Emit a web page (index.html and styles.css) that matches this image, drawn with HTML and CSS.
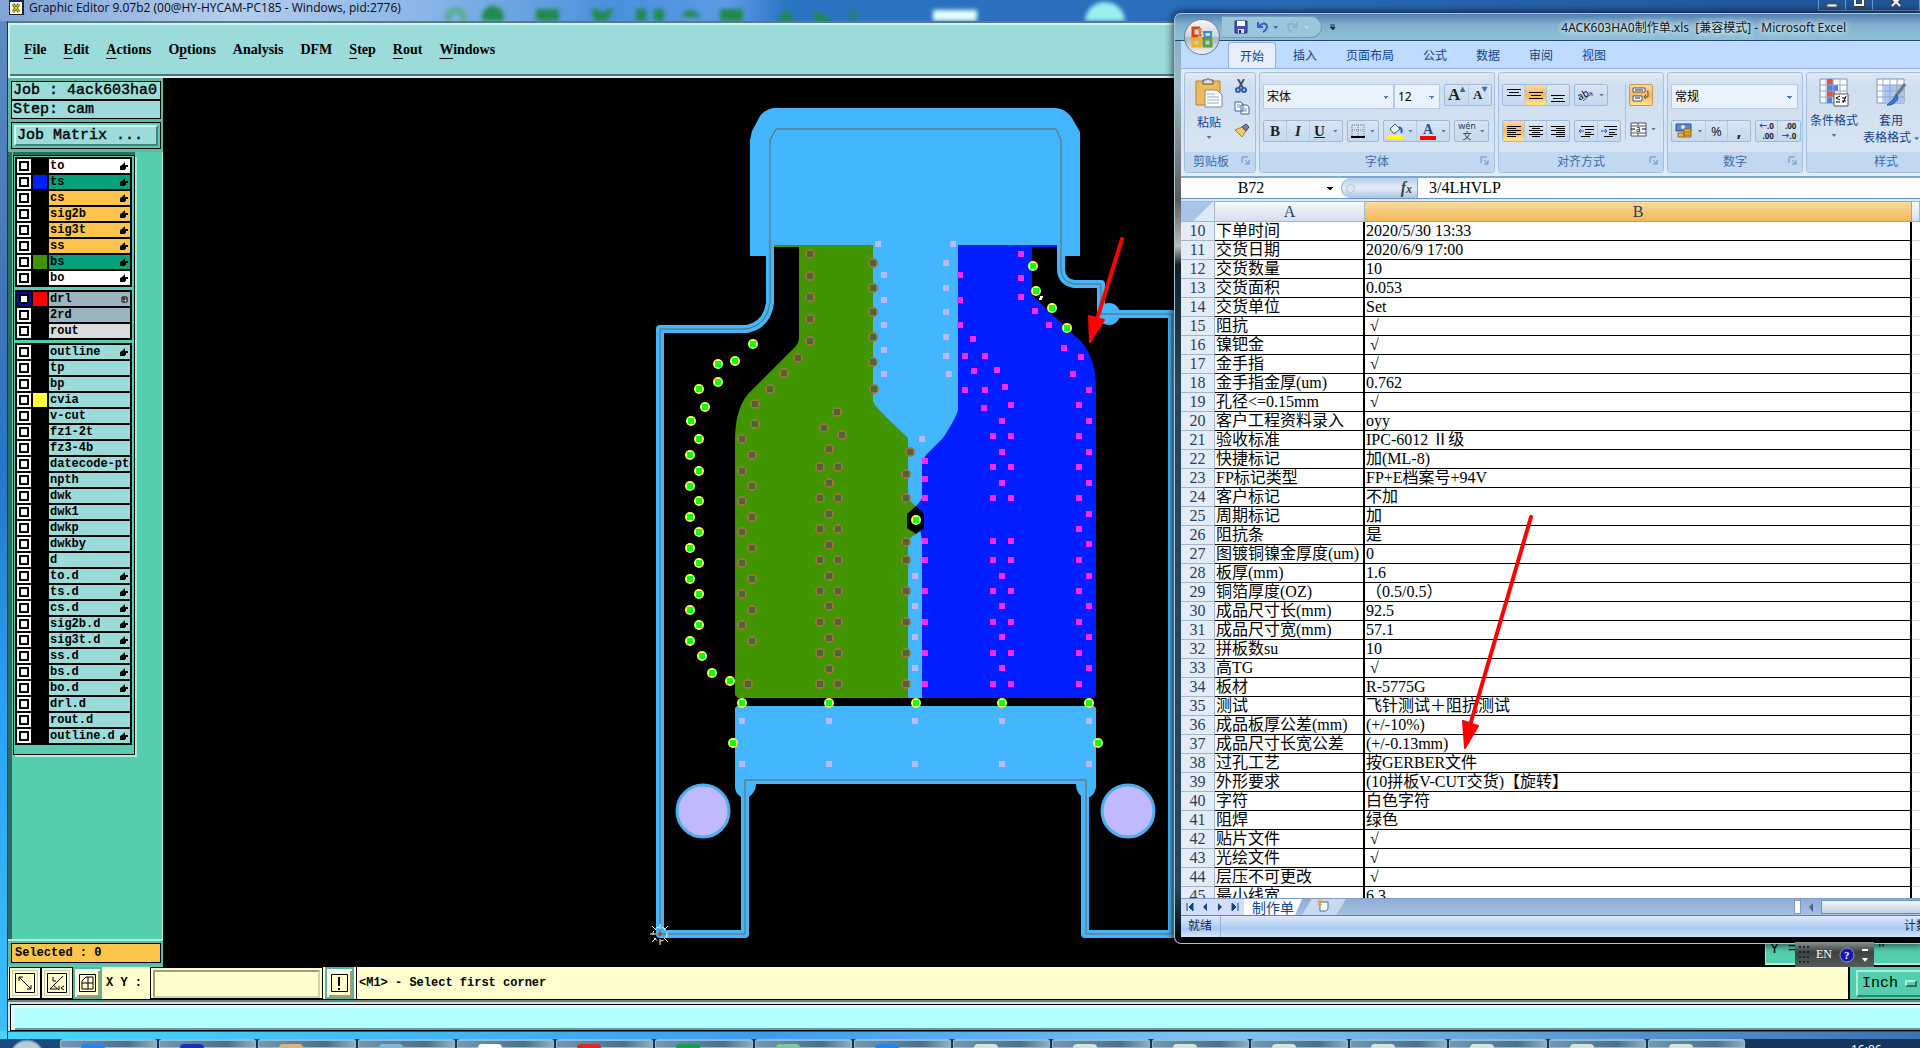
FILE: index.html
```html
<!DOCTYPE html>
<html lang="zh-CN">
<head>
  <meta charset="UTF-8" />
  <meta name="viewport" content="width=device-width, initial-scale=1.0" />
  <title>Graphic Editor 9.07b2</title>
  <link rel="stylesheet" href="styles.css">
</head>
<body>
  <div class="desktop">

    <!-- Graphic Editor -->
    <main class="editor">
      <header class="editor-title">
        <svg class="app-icon" width="15" height="15" viewBox="0 0 15 15"><path d="M0 0h15v15H0z" fill="#222"/><path d="M1 2h12v12H1z" fill="#fff"/><path d="M1 0h10v2H1z" fill="#12246e"/><path d="M4 4l6 8M10 4l-6 8" stroke="#777400" stroke-width="3"/><path d="M4 4l6 8M10 4l-6 8" stroke="#e2dc3c" stroke-width="1"/></svg>
        <span class="editor-name">Graphic Editor 9.07b2 (00@HY-HYCAM-PC185 - Windows, pid:2776)</span>
        <svg class="glass-icons" width="420" height="21" viewBox="0 0 420 21"><g fill="#1f8a4c"><circle cx="20" cy="18" r="8" fill="none" stroke="#4fae7a" stroke-width="5"/><circle cx="57" cy="17" r="11"/><path d="M100 9h23v12h-23zM155 9h8l4 5 4-5h7l-7 12h-12zM200 9h10v12h-10zM218 9h10v12h-10z"/><path d="M245 17q8-14 20 0M284 9h23v12h-23zM350 9l9 12h-18zM378 10l20 11h-20z"/><path d="M425 10v11h-10v-11z"/></g></svg>
        <svg class="glass-blobs" width="220" height="21" viewBox="0 0 220 21"><path d="M8 10h44v14H8z" fill="#e3fffc"/><circle cx="180" cy="22" r="20" fill="#9bf0ef"/></svg>
        <div class="window-buttons">
          <button aria-label="Minimize"><svg width="12" height="11"><path d="M1 4h10v3H1z" fill="#fff" stroke="#555"/></svg></button>
          <button aria-label="Maximize"><svg width="12" height="11"><path d="M2 -2h8v7H2z" fill="none" stroke="#444" stroke-width="4"/><path d="M2 -2h8v7H2z" fill="none" stroke="#fff" stroke-width="2"/></svg></button>
          <button aria-label="Close"><svg width="14" height="11"><path d="M3 -2l8 8M11 -2l-8 8" stroke="#444" stroke-width="4"/><path d="M3 -2l8 8M11 -2l-8 8" stroke="#fff" stroke-width="2"/></svg></button>
        </div>
      </header>

      <nav class="menubar">
        <a href="#"><u>F</u>ile</a>
        <a href="#"><u>E</u>dit</a>
        <a href="#"><u>A</u>ctions</a>
        <a href="#">O<u>p</u>tions</a>
        <a href="#">Analysis</a>
        <a href="#">DFM</a>
        <a href="#"><u>S</u>tep</a>
        <a href="#"><u>R</u>out</a>
        <a href="#"><u>W</u>indows</a>
      </nav>

      <div class="workspace">
        <aside class="sidebar">
          <div class="job-info">
            <div class="info-line">Job : 4ack603ha0</div>
            <div class="info-line">Step: cam</div>
            <div class="matrix-box"><button class="matrix-button">Job Matrix ...</button></div>
          </div>
          <div class="layer-area">
            <div class="layer-panel" id="layerPanel"></div>
          </div>
          <div class="selected-box"><div class="selected">Selected : 0</div></div>
        </aside>

        <section class="canvas">
          <svg class="board" width="100%" height="100%">
            <g transform="translate(-163 -78)">
              <!-- Copper areas -->
              <path d="M774 245H873V402L916 440V698H738L735 695V440Q735 405 752 390L796 346Q799 342 799 338V247H774Z" fill="#419600"/>
              <path d="M958 245H1057V247H1032V295L1074 335Q1096 352 1096 388V695L1093 698H916V440Z" fill="#001eff"/>
              <path d="M750 140L752 131L760 116Q766 108 776 108H1056Q1066 109 1072 118L1080 132V256H1065V245H958V410Q956 418 943 438L926 455L922 462V498L916 506L922 540V698H908V540L916 534V506L908 499V438L886 417Q876 407 873 402V245H774V256H750Z" fill="#43b6ff"/>
              <path d="M908 499L916 506L922 499ZM908 540L916 534L922 540Z" fill="#43b6ff"/>
              <path d="M916 506L924 514V528L916 534L907 528V514Z" fill="#000"/>
              <path d="M735 708L737 706H1094L1096 708V787Q1095 794 1090 797H1082Q1076 792 1076 784H756Q756 792 749 797H741Q735 793 735 787Z" fill="#43b6ff"/>
              <circle cx="1109" cy="314" r="11" fill="#43b6ff"/>

              <!-- Board outline -->
              <path d="M770 140V303Q767 325 747 329H660V934H745V780H1085V934H1172V314H1101V284H1074Q1062 282 1061 270V140" fill="none" stroke="#43b6ff" stroke-width="8" stroke-linejoin="round"/>
              <path d="M776 129H1056L1061 140V270Q1062 282 1074 284H1101V314H1172V934H1086V780H745V934H660V329H747Q767 325 770 303V140Z" fill="none" stroke="#75604e" stroke-width="1"/>

              <circle cx="703" cy="811" r="26" fill="#c0b9ff" stroke="#4eaef0" stroke-width="3"/>
              <circle cx="1128" cy="811" r="26" fill="#c0b9ff" stroke="#4eaef0" stroke-width="3"/>
              <g id="pads"></g>

              <!-- Datum point -->
              <g fill="none" stroke="#fff"><circle cx="660" cy="934" r="7" stroke-dasharray="4 3"/><path d="M650 934h6M660 924v5M660 939v6M652 926l4 4M668 926l-4 4M652 942l4-4M668 942l-4-4"/></g>
              <circle cx="660" cy="934" r="2" fill="#a84c10"/>
              <path d="M1039 299h2v-2h2" fill="none" stroke="#fff" stroke-width="2"/>
            </g>
          </svg>
          <div class="readout"><span>Y =</span><span>"</span></div>
        </section>
      </div>

      <div class="command-bar">
        <button class="tool" aria-label="Zoom area"><svg width="20" height="20"><path d="M.5.5h19v19H.5z" fill="none" stroke="#000"/><path d="M4 4l12 12M4 8V4h4M12 16h4v-4" fill="none" stroke="#000"/></svg></button>
        <button class="tool" aria-label="Snap"><svg width="20" height="20"><path d="M.5.5h19v19H.5z" fill="none" stroke="#000"/><path d="M3 16L16 3M3 16h7M6 4v4h3M6 12l6 5M12 13v4M17 13l-3 2 3 2" fill="none" stroke="#000"/></svg></button>
        <button class="tool raised" aria-label="Grid"><svg width="17" height="18"><path d="M.5.5h16v17H.5z" fill="none" stroke="#000"/><path d="M3 7l4-4h7v12H3zM3 9h11M9 3v12" fill="none" stroke="#000"/></svg></button>
        <label class="xy-label" for="xy">X Y :</label>
        <div class="xy-field"><input id="xy" type="text"></div>
        <button class="tool raised alert" aria-label="Message"><svg width="17" height="18"><path d="M.5.5h16v17H.5z" fill="none" stroke="#000"/><path d="M8 3v9M8 14v2" stroke="#000" stroke-width="2"/></svg></button>
        <output class="prompt">&lt;M1&gt; - Select first corner</output>
        <div class="unit-box"><button class="unit">Inch <i></i></button></div>
      </div>
      <div class="message-line"><div></div></div>
    </main>

    <!-- Excel -->
    <section class="excel">
      <header class="excel-title">
        <button class="office" aria-label="Office"><svg width="24" height="24" viewBox="0 0 24 24" fill="none" stroke-width="3"><path d="M10 3H3v8h5" stroke="#d8440c"/><path d="M10 3v5" stroke="#e87a28"/><path d="M14 7h7v5h-6z" stroke="#3d86c8" stroke-width="2"/><path d="M10 14H3v7h7z" stroke="#f2b01c"/><path d="M14 14h7v7h-7z" stroke="#5aa03c"/><path d="M9 9h2v2H9zM13 13h1v1h-1z" stroke="#d8440c" stroke-width="1"/></svg></button>
        <div class="quick">
          <button aria-label="保存"><svg width="14" height="14"><path d="M1 1h12v12H1z" fill="#4b4fb4" stroke="#29307c"/><path d="M3 1h8v5H3z" fill="#fff"/><path d="M4 9h6v4H4z" fill="#dfe4f4"/><path d="M5 10h2v3H5z" fill="#222"/></svg></button>
          <button aria-label="撤消"><svg width="22" height="14"><path d="M2 2v5h5M3 6q6-5 8 0 0 4-4 6" fill="none" stroke="#2f62b8" stroke-width="2"/><path d="M17 6h5l-2 3z" fill="#3c6baf"/></svg></button>
          <button aria-label="恢复"><svg width="24" height="14"><path d="M11 2v5H6M10 6Q4 1 2 6q0 4 4 6" fill="none" stroke="#8fb0c8" stroke-width="2"/><path d="M18 6h5l-2 3z" fill="#c9dce8"/></svg></button>
        </div>
        <button class="quick-more" aria-label="自定义"><svg width="7" height="7"><path d="M1 1h5M1 3h5l-2 3z" stroke="#234" fill="#234"/></svg></button>
        <h1>4ACK603HA0制作单.xls&nbsp; [兼容模式] - Microsoft Excel</h1>
      </header>

      <nav class="tabs">
        <button class="tab active">开始</button>
        <button class="tab">插入</button>
        <button class="tab">页面布局</button>
        <button class="tab">公式</button>
        <button class="tab">数据</button>
        <button class="tab">审阅</button>
        <button class="tab">视图</button>
      </nav>

      <div class="ribbon">
        <section class="group clipboard">
          <div class="group-body">
            <button class="big"><svg width="28" height="30"><path d="M1 3h24v24H1z" fill="#eebb5a" stroke="#b48331"/><path d="M8 2h3q2-3 4 0h3v4H8z" fill="#ddd" stroke="#555"/><path d="M10 12h12l5 5v12H10z" fill="#fff" stroke="#7d8899"/><path d="M12 16h8M12 19h12M12 22h12M12 25h12" stroke="#9aa9c2"/></svg>粘贴<i class="caret"></i></button>
            <div class="stack">
              <button aria-label="剪切"><svg width="14" height="14"><path d="M4 0l5 9M10 0L5 9" stroke="#456" stroke-width="2"/><circle cx="4" cy="11" r="2" fill="none" stroke="#2a5db0" stroke-width="2"/><circle cx="10" cy="11" r="2" fill="none" stroke="#2a5db0" stroke-width="2"/></svg></button>
              <button aria-label="复制"><svg width="16" height="14"><path d="M1 1h6l2 2v7H1zM7 4h6l2 2v7H7z" fill="#fff" stroke="#3662a8"/><path d="M3 4h3M3 6h3M9 8h4M9 10h4" stroke="#6d90c8"/></svg></button>
              <button aria-label="格式刷"><svg width="16" height="15"><path d="M1 7l7-3 4 4-4 6z" fill="#f0cc62" stroke="#a9832c"/><path d="M8 4l4 4 3-4-3-3z" fill="#7b7fc0" stroke="#445"/></svg></button>
            </div>
          </div>
          <footer>剪贴板<svg class="launch" width="9" height="9"><path d="M1 7V1h6M4 4l4 4M8 4v4H4" fill="none" stroke="#6a8fc0"/></svg></footer>
        </section>

        <section class="group font">
          <div class="group-body rows">
            <div class="row">
              <div class="joined"><select class="font-name" aria-label="字体"><option>宋体</option></select><select class="font-size" aria-label="字号"><option>12</option></select></div>
              <div class="buttons serif"><button class="grow">A<sup>▴</sup></button><button class="shrink">A<sup>▾</sup></button></div>
            </div>
            <div class="row">
              <div class="buttons serif biu"><button><b>B</b></button><button><em>I</em></button><button><u>U</u><i class="caret"></i></button></div>
              <div class="buttons"><button aria-label="边框"><svg width="14" height="14"><path d="M1 1h12v11M1 1v11M7 1v11M1 6h12" fill="none" stroke="#678" stroke-dasharray="1 1"/><path d="M0 13h14" stroke="#000" stroke-width="2"/></svg><i class="caret"></i></button></div>
              <div class="buttons"><button aria-label="填充颜色"><svg width="16" height="16"><path d="M3 6l5-5 5 5-6 5z" fill="#eef4ff" stroke="#456"/><path d="M12 4q4 2 2 6" stroke="#2f62b8" stroke-width="2" fill="none"/><path d="M0 12h16v4H0z" fill="#ff0"/></svg><i class="caret"></i></button><button class="color" aria-label="字体颜色"><span>A</span><i class="caret"></i></button></div>
              <div class="buttons"><button class="pinyin"><span>wén<br>文</span><i class="caret"></i></button></div>
            </div>
          </div>
          <footer>字体<svg class="launch" width="9" height="9"><path d="M1 7V1h6M4 4l4 4M8 4v4H4" fill="none" stroke="#6a8fc0"/></svg></footer>
        </section>

        <section class="group align">
          <div class="group-body">
            <div class="rows">
              <div class="row">
                <div class="buttons"><button aria-label="顶端对齐"><svg width="14" height="14"><path d="M0 1.5h14M2 4.5h10M0 7.5h14" stroke="#000"/></svg></button><button class="on" aria-label="垂直居中"><svg width="14" height="14"><path d="M0 4.5h14M2 7.5h10M0 10.5h14" stroke="#000"/></svg></button><button aria-label="底端对齐"><svg width="14" height="14"><path d="M0 7.5h14M2 10.5h10M0 13.5h14" stroke="#000"/></svg></button></div>
                <div class="buttons"><button aria-label="方向"><svg width="16" height="14"><text x="0" y="11" font-size="10" transform="rotate(-30 4 9)">ab</text><path d="M5 13L14 5M11 5h3v3" fill="none" stroke="#456"/></svg><i class="caret"></i></button></div>
              </div>
              <div class="row">
                <div class="buttons"><button class="on" aria-label="左对齐"><svg width="14" height="12"><path d="M0 1.5h14M0 3.5h9M0 5.5h14M0 7.5h9M0 9.5h14M0 11.5h9" stroke="#000"/></svg></button><button aria-label="居中"><svg width="14" height="12"><path d="M0 1.5h14M3 3.5h8M0 5.5h14M3 7.5h8M0 9.5h14M3 11.5h8" stroke="#000"/></svg></button><button aria-label="右对齐"><svg width="14" height="12"><path d="M0 1.5h14M5 3.5h9M0 5.5h14M5 7.5h9M0 9.5h14M5 11.5h9" stroke="#000"/></svg></button></div>
                <div class="buttons"><button aria-label="减少缩进"><svg width="16" height="13"><path d="M3 1.5h13M7 4.5h9M7 7.5h6M7 9.5h9M3 11.5h9" stroke="#000"/><path d="M6 6H1M3 4L1 6l2 2" fill="none" stroke="#1d59c9"/></svg></button><button aria-label="增加缩进"><svg width="16" height="13"><path d="M3 1.5h13M8 4.5h8M8 7.5h6M8 9.5h8M3 11.5h9" stroke="#000"/><path d="M0 6h6M4 4l2 2-2 2" fill="none" stroke="#1d59c9"/></svg></button></div>
              </div>
            </div>
            <div class="rows wrap-col">
              <button class="on" aria-label="自动换行"><svg width="18" height="16"><path d="M1 1h12v4H1zM1 9h9v5H1z" fill="#fff" stroke="#456"/><path d="M3 3h8M3 11h5" stroke="#222"/><path d="M15 4h1v6h-4M14 8l-2 2 2 2" fill="none" stroke="#456"/></svg></button>
              <button class="plain" aria-label="合并后居中"><svg width="17" height="15"><path d="M1 1h15v13H1zM1 4h15M1 11h15M8 1v3M8 11v3" fill="#fff" stroke="#456"/><text x="6" y="10" font-size="8">a</text><path d="M1 7h4M12 7h4" stroke="#000"/></svg><i class="caret"></i></button>
            </div>
          </div>
          <footer>对齐方式<svg class="launch" width="9" height="9"><path d="M1 7V1h6M4 4l4 4M8 4v4H4" fill="none" stroke="#6a8fc0"/></svg></footer>
        </section>

        <section class="group number">
          <div class="group-body rows">
            <div class="row"><select class="format" aria-label="数字格式"><option>常规</option></select></div>
            <div class="row">
              <div class="buttons money"><button aria-label="货币"><svg width="18" height="16"><path d="M1 1h15v7H1z" fill="#5b87c9" stroke="#2b4f92"/><circle cx="8" cy="4" r="2" fill="#d9e6fa"/><path d="M3 10h6v4H3zM9 6h7v8H9z" fill="#e9b23a" stroke="#9c6d12"/><path d="M9 9h7M9 12h7" stroke="#9c6d12"/></svg><i class="caret"></i></button><button class="pct">%</button><button class="comma">,</button></div>
              <div class="buttons decimals"><button><span><b>←</b>.0<br>.00</span></button><button><span>.00<br><b>→</b>.0</span></button></div>
            </div>
          </div>
          <footer>数字<svg class="launch" width="9" height="9"><path d="M1 7V1h6M4 4l4 4M8 4v4H4" fill="none" stroke="#6a8fc0"/></svg></footer>
        </section>

        <section class="group style">
          <div class="group-body">
            <button class="big"><svg width="30" height="29"><path d="M1 1h27v24H1z" fill="#fff" stroke="#7d95bb"/><path d="M8 1h6v6H8zM8 13h8v6H8z" fill="#e0503c"/><path d="M8 7h11v6H8zM8 19h5v6H8z" fill="#4f82dc"/><path d="M1 7h27M1 13h27M1 19h27M7 1v24M14 1v24M21 1v24" stroke="#93a8cb"/><path d="M15 16h14v12H15z" fill="#fff" stroke="#555"/><path d="M21 18l-4 2 4 2M17 24h4M23 20h4M23 23h4M27 18l-3 7" stroke="#000" fill="none"/></svg>条件格式<i class="caret"></i></button>
            <button class="big"><svg width="30" height="29"><path d="M1 1h27v24H1z" fill="#fff" stroke="#7d95bb"/><path d="M8 7h20v18H8z" fill="#a9c6f4"/><path d="M1 7h27M1 13h27M1 19h27M7 1v24M14 1v24M21 1v24" stroke="#8ca5cf"/><path d="M29 6l-9 12" stroke="#777" stroke-width="3"/><path d="M20 17l2 3q-4 8-11 7 5-3 9-10z" fill="#3f78cf" stroke="#24508f"/></svg>套用<span>表格格式 <i class="caret"></i></span></button>
          </div>
          <footer>样式</footer>
        </section>
      </div>

      <div class="formula-bar">
        <input class="name-box" type="text" value="B72" aria-label="名称框">
        <div class="fx"><span class="knob"></span><em>f<small>x</small></em></div>
        <input class="formula" type="text" value="3/4LHVLP" aria-label="编辑栏">
      </div>

      <div class="sheet">
        <table>
          <colgroup><col class="col-head"><col class="col-a"><col class="col-b"><col class="col-c"></colgroup>
          <thead><tr><th class="corner"></th><th>A</th><th class="current">B</th><th></th></tr></thead>
          <tbody id="sheetRows"></tbody>
        </table>
      </div>

      <div class="sheet-tabs">
        <div class="sheet-nav">
          <button aria-label="第一张"><svg width="8" height="8"><path d="M1 0v8M7 0v8L3 4z" fill="#15428b" stroke="#15428b"/></svg></button>
          <button aria-label="上一张"><svg width="8" height="8"><path d="M6 0v8L2 4z" fill="#15428b"/></svg></button>
          <button aria-label="下一张"><svg width="8" height="8"><path d="M2 0v8l4-4z" fill="#15428b"/></svg></button>
          <button aria-label="最后一张"><svg width="8" height="8"><path d="M7 0v8M1 0v8l4-4z" fill="#15428b" stroke="#15428b"/></svg></button>
        </div>
        <button class="sheet-tab">制作单</button>
        <button class="new-sheet" aria-label="插入工作表"><svg width="16" height="13"><path d="M4 3h8v7l-2 2H4z" fill="#fff" stroke="#55689c"/><path d="M4 0v7M1 3h7M2 1l4 5M6 1L2 6" stroke="#e7a12c"/></svg></button>
        <div class="hscroll"><span class="split"></span><button aria-label="向左滚动"><svg width="6" height="9"><path d="M5 0v9L1 4z" fill="#4a6491"/></svg></button><span class="thumb"></span></div>
      </div>
      <footer class="status"><span>就绪</span><span class="count">计数</span></footer>
    </section>

    <div class="language-bar">
      <svg width="10" height="17"><path d="M1 0v17M5 0v17M9 0v17" stroke="#222" stroke-width="2" stroke-dasharray="2 3"/></svg>
      <span>EN</span>
      <svg width="16" height="16"><circle cx="8" cy="8" r="7" fill="#1515b8" stroke="#99a"/><text x="5" y="12" font-size="11" font-weight="bold" fill="#fff">?</text></svg>
      <svg width="6" height="16"><path d="M0 2h6v2H0zM0 11h6l-3 4z" fill="#fff"/></svg>
    </div>

    <svg class="arrows" width="100%" height="100%">
      <g stroke="#f00" fill="#f00" stroke-linecap="round" stroke-linejoin="round">
        <path d="M1122 239L1098 316" stroke-width="4"/><path d="M1090 342L1089 316L1104 320Z" stroke-width="2"/>
        <path d="M1531 517L1471 722" stroke-width="4"/><path d="M1465 748L1463 721L1478 726Z" stroke-width="2"/>
      </g>
    </svg>

    <footer class="taskbar">
      <div class="start"></div>
      <div class="tasks" id="tasks"></div>
      <time>16:06</time>
    </footer>
  </div>

  <script>
    // Layer list: [name, row colour class, mark, swatch]
    const layerGroups = [
      [['to', 'white', 'hand'], ['ts', 'green', 'hand', 'blue'], ['cs', 'orange', 'hand'], ['sig2b', 'orange', 'hand'],
       ['sig3t', 'orange', 'hand'], ['ss', 'orange', 'hand'], ['bs', 'green', 'hand', 'olive'], ['bo', 'white', 'hand']],
      [['drl', 'slate', 'grid', 'red'], ['2rd', 'slate'], ['rout', 'silver']],
      [['outline', '', 'hand'], ['tp'], ['bp'], ['cvia', '', '', 'yellow'], ['v-cut'], ['fz1-2t'], ['fz3-4b'], ['datecode-pto'],
       ['npth'], ['dwk'], ['dwk1'], ['dwkp'], ['dwkby'], ['d'], ['to.d', '', 'hand'], ['ts.d', '', 'hand'], ['cs.d', '', 'hand'],
       ['sig2b.d', '', 'hand'], ['sig3t.d', '', 'hand'], ['ss.d', '', 'hand'], ['bs.d', '', 'hand'], ['bo.d', '', 'hand'],
       ['drl.d'], ['rout.d'], ['outline.d', '', 'hand']]
    ];
    const marks = {
      hand: '<svg width="8" height="8"><path d="M0 4l2-1 3-3v3h3v2H6v2H5v1H0z"/></svg>',
      grid: '<svg width="7" height="7"><path d="M1 1h5v5H1zM3 1v5M1 3h5" fill="#fff" stroke="#000"/></svg>'
    };
    document.getElementById('layerPanel').innerHTML = layerGroups.map(group =>
      '<div class="layers">' + group.map(([name, tone = '', mark = '', swatch = '']) => `
        <label class="layer">
          <input type="checkbox" class="${name === 'drl' ? 'work' : ''}">
          <span class="swatch ${swatch}"></span>
          <span class="layer-name ${tone}"><span>${name}</span>${marks[mark] || ''}</span>
        </label>`).join('') + '</div>').join('');

    // Spreadsheet rows, starting at row 10
    const rows = [
      ['下单时间', '2020/5/30 13:33'], ['交货日期', '2020/6/9 17:00'], ['交货数量', '10'], ['交货面积', '0.053'],
      ['交货单位', 'Set'], ['阻抗', '√'], ['镍钯金', '√'], ['金手指', '√'], ['金手指金厚(um)', '0.762'],
      ['孔径<=0.15mm', '√'], ['客户工程资料录入', 'oyy'], ['验收标准', 'IPC-6012 Ⅱ级'], ['快捷标记', '加(ML-8)'],
      ['FP标记类型', 'FP+E档案号+94V'], ['客户标记', '不加'], ['周期标记', '加'], ['阻抗条', '是'],
      ['图镀铜镍金厚度(um)', '0'], ['板厚(mm)', '1.6'], ['铜箔厚度(OZ)', '（0.5/0.5）'], ['成品尺寸长(mm)', '92.5'],
      ['成品尺寸宽(mm)', '57.1'], ['拼板数su', '10'], ['高TG', '√'], ['板材', 'R-5775G'], ['测试', '飞针测试＋阻抗测试'],
      ['成品板厚公差(mm)', '(+/-10%)'], ['成品尺寸长宽公差', '(+/-0.13mm)'], ['过孔工艺', '按GERBER文件'],
      ['外形要求', '(10拼板V-CUT交货)【旋转】'], ['字符', '白色字符'], ['阻焊', '绿色'], ['贴片文件', '√'],
      ['光绘文件', '√'], ['层压不可更改', '√'], ['最小线宽', '6.3']
    ];
    const tbody = document.getElementById('sheetRows');
    rows.forEach((cells, i) => {
      const tr = tbody.insertRow();
      const th = document.createElement('th');
      th.textContent = i + 10;
      tr.appendChild(th);
      cells.forEach(text => {
        const td = tr.insertCell();
        td.textContent = text;
        if (text === '√') td.className = 'tick';
      });
      tr.insertCell();
    });

    // Pads: every entry is [x, ...y]
    const vias = [
      [753, 344], [735, 361], [718, 364, 382], [705, 407], [691, 421],
      [699, 389, 439, 471, 501, 532, 563, 594, 625], [690, 455, 486, 517, 548, 579, 610, 641],
      [702, 656], [712, 673], [730, 681], [1033, 266], [1036, 291], [1052, 308], [1067, 328],
      [916, 520, 703], [742, 703], [829, 703], [1002, 703], [1089, 703], [733, 743], [1098, 743]
    ];
    const pairs = [467, 498, 529, 560, 591, 622, 653, 684];
    const buried = [
      [810, 254, 276, 297, 319, 341], [798, 358], [784, 373], [770, 389], [755, 404, 424],
      [742, 439, 471, 501, 532, 563, 594, 625], [752, 455, 486, 517, 548, 579, 610, 641], [748, 684],
      [837, 412], [824, 428], [842, 435], [829, 449, 483, 514, 545, 576, 606, 638, 669], [820, ...pairs], [838, ...pairs],
      [873, 263, 288, 312, 337, 362], [874, 389], [910, 452], [906, 474, 498, 542, 560, 591, 622, 653, 684]
    ];
    const topDots = [
      [1021, 254, 278, 297], [1035, 311], [1049, 325], [1064, 348], [1081, 357], [1073, 374],
      [1089, 390, 421, 452, 483, 514, 544, 576, 606, 637, 668], [1079, 405, 436, ...pairs],
      [960, 275, 300, 325], [973, 339], [965, 356, 390], [985, 356, 390], [974, 371], [997, 370], [1005, 387], [984, 408],
      [1002, 421, 452, 483, 576, 606, 637, 668], [1011, 405], [993, 436, 467, 498, 541, 560, 591, 622, 653, 684],
      [1011, 436, 467, 498, 541, 560, 591, 622, 653, 684], [925, 461, 479, 498, 541, 560, 591, 622, 653, 684]
    ];
    const maskDots = [
      [878, 244], [953, 244], [884, 275, 300, 325, 350, 374], [946, 263, 288, 312, 337, 356], [949, 374], [922, 439],
      [915, 576, 606, 637, 668, 721, 764], [742, 721, 764], [829, 721, 764], [1002, 721, 764], [1089, 721, 764]
    ];
    const each = (list, draw) => list.map(([x, ...ys]) => ys.map(y => draw(x, y)).join('')).join('');
    const dot = (x, y, fill) => `<rect x="${x - 3}" y="${y - 3}" width="6" height="6" fill="${fill}"/>`;
    document.getElementById('pads').innerHTML =
      each(buried, (x, y) => `<circle cx="${x}" cy="${y}" r="5" fill="#aa6e40"/>` + dot(x, y, '#476838')) +
      each(topDots, (x, y) => dot(x, y, '#ff28ff')) +
      each(maskDots, (x, y) => dot(x, y, '#b9b9ff')) +
      each(vias, (x, y) => `<circle cx="${x}" cy="${y}" r="5" fill="#ffff48"/>` + dot(x, y, '#0cff2a'));

    document.getElementById('tasks').innerHTML = '<button aria-label="Task"><i></i></button>'.repeat(17);
    const taskColors = ['#2a84ee', '#1c30b8', '#d8b878', '#7fb8d8', '#fff', '#d82c2c', '#18a048', '#7fc89a', '#2a84ee'];
    document.querySelectorAll('.tasks i').forEach((icon, i) => { icon.style.background = taskColors[i] || '#d5e3dc'; });
  </script>
</body>
</html>
```
FILE: styles.css
```css
* { box-sizing: border-box; }
body { margin: 0; background: #000; }
button, input, select { font: inherit; color: inherit; margin: 0; padding: 0; border: 0; background: none; border-radius: 0; }
svg { display: block; flex: none; }

.desktop { position: relative; height: 100vh; overflow: hidden; display: flex; flex-direction: column; }

/* ---- Graphic Editor ---- */
.editor {
  flex: 1;
  min-height: 0;
  display: flex;
  flex-direction: column;
  padding: 0 0 7px 8px;
  background:
    linear-gradient(90deg, transparent 7px, #12384c 7px, #12384c 8px, transparent 8px),
    linear-gradient(90deg, #43d8ff, #3a9df5 40%, #7cc4f2 64%, #3a72b8) bottom / 100% 8px no-repeat,
    linear-gradient(#5f8cc4, #3f74b4 30%, #2476cc 45%, #27a6f8 70%, #3cc0ff);
  font-family: "Liberation Mono", monospace;
  font-weight: bold;
}
.editor-title {
  height: 21px;
  margin-left: -8px;
  padding-left: 9px;
  display: flex;
  align-items: flex-start;
  gap: 5px;
  overflow: hidden;
  background: linear-gradient(90deg, #7fa4d4, #b4cdee 12%, #8ab6e6 22%, #4a90dc 32%, #5d9ae4 38%, #2b74c4 41%, #2a6dba 62%, #1f5394);
  font: 12px "Open Sans", "Noto Sans", sans-serif;
  color: #0a0a14;
}
.editor-name { width: 396px; line-height: 15px; white-space: nowrap; }
.glass-icons, .glass-blobs { filter: blur(2px); }
.glass-icons { margin-left: 6px; }
.glass-blobs { margin-left: 64px; }
.window-buttons { margin-left: auto; height: 11px; display: flex; border: 1px solid #6f9ccc; border-top: 0; }
.window-buttons button { width: 27px; border-right: 1px solid #6f9ccc; display: flex; justify-content: center; }
.window-buttons button:last-child { width: 46px; border: 0; }

.menubar {
  height: 57px;
  display: flex;
  align-items: center;
  gap: 17px;
  padding-left: 16px;
  background: #9bdbd9;
  border-top: 2px solid #4e7f86;
  border-bottom: 2px solid #d5f3f1;
  box-shadow: inset 2px 2px #d5f3f1, inset 0 -2px #4e7475;
  font: bold 14px "Liberation Serif", serif;
}
.menubar a { color: #000; text-decoration: none; }
.menubar u { text-underline-offset: 4px; }

.workspace { flex: 1; min-height: 0; display: flex; background: #000; }
.sidebar { width: 155px; display: flex; flex-direction: column; background: #54ceaf; }
.job-info { padding: 3px 2px 3px 3px; background: #62b8a0; font-size: 15px; }
.info-line { height: 19px; line-height: 18px; padding-left: 1px; border: 1px solid #000; background: #9bdbd9; white-space: nowrap; overflow: hidden; font-weight: normal; -webkit-text-stroke: 0.4px #000; }
.matrix-box { margin-top: 3px; padding: 2px; border: 1px solid #000; background: #54ceaf; }
.matrix-button { width: 100%; height: 21px; text-align: left; padding-left: 1px; line-height: 17px; background: #9bdbd9; border: 2px solid; border-color: #d5f3f1 #4b8080 #4b8080 #d5f3f1; font-weight: normal; -webkit-text-stroke: 0.4px #000; }
.layer-area { flex: 1; min-height: 0; border-right: 1px solid #a8f0da; padding-right: 27px; background: linear-gradient(90deg, #2f6b5f 4px, transparent 4px); }
.layer-panel {
  margin: 3px 0 0 5px;
  padding: 1px 2px 9px 1px;
  border: 1px solid #000;
  box-shadow: 2px 2px #a8f0da, 0 -3px #2f6b5f;
  display: flex;
  flex-direction: column;
  gap: 3px;
}
.layers { padding: 2px; background: #000; display: flex; flex-direction: column; gap: 2px; }
.layer { height: 14px; display: flex; gap: 2px; font-size: 12px; }
.layer input { appearance: none; flex: none; width: 14px; height: 14px; border: 2px solid #fff; outline: 2px solid #000; outline-offset: -4px; background: #fff; }
.layer input.work { border-color: #0a0a9c; }
.swatch { flex: none; width: 14px; background: #000; }
.blue { background: #001eff; }
.olive { background: #419600; }
.red { background: #f00; }
.yellow { background: #ffff3c; }
.layer-name { flex: 1; min-width: 0; display: flex; align-items: center; justify-content: space-between; padding: 0 1px; line-height: 12px; background: #9bdbd9; overflow: hidden; white-space: nowrap; }
.layer-name svg { margin-right: 1px; }
.layer-name.white { background: #fff; }
.layer-name.green { background: #04a27b; }
.layer-name.orange { background: #ffc44c; }
.layer-name.slate { background: #9bb5bf; }
.layer-name.silver { background: #dcdcdc; }
.selected-box { border-top: 2px solid #a8f0da; padding: 2px 2px 2px 3px; background: #62b8a0; margin-bottom: 2px; }
.selected { height: 20px; line-height: 18px; border: 1px solid #000; padding-left: 3px; background: #ffc44c; font-size: 12px; }

.canvas { flex: 1; min-width: 0; display: grid; background: #000; overflow: hidden; }
.board, .readout { grid-area: 1 / 1; }
.readout {
  align-self: end;
  justify-self: end;
  width: 155px;
  height: 28px;
  margin-bottom: 2px;
  padding: 0 34px 0 4px;
  display: flex;
  justify-content: space-between;
  line-height: 26px;
  background: #54ceaf;
  border-bottom: 2px solid #a8f0da;
  border-left: 1px solid #a8f0da;
  font-size: 15px;
  font-weight: normal;
}

.command-bar { height: 33px; display: flex; padding-left: 1px; background: #ffffcd; border-bottom: 1px solid #000; font-size: 12px; }
.tool { width: 32px; display: flex; align-items: center; justify-content: center; border: 1px solid #000; box-shadow: inset 0 0 0 2px #ffffe8, inset 0 0 0 3px #ccc9a4; }
.tool.raised { width: 29px; border: 2px solid #58b49c; box-shadow: inset 2px 2px #fff, inset -2px -2px #a19d7e; }
.tool.alert { margin: 0 2px; }
.xy-label { width: 48px; line-height: 33px; padding-left: 4px; }
.xy-field { width: 173px; padding: 2px; border: 1px solid #000; }
.xy-field input { width: 100%; height: 28px; padding: 0 4px; border: 2px solid; border-color: #a19d7e #d4d0ac #d4d0ac #a19d7e; background: #ffffcd; }
.prompt { flex: 1; line-height: 33px; padding-left: 2px; border-left: 1px solid #000; white-space: nowrap; }
.unit-box { width: 72px; padding: 3px 0 2px 6px; background: #54ceaf; border-left: 2px solid #000; overflow: hidden; }
.unit { width: 80px; height: 27px; display: flex; align-items: center; gap: 7px; padding-left: 4px; border: 2px solid; border-color: #a8f0da #2f8570 #2f8570 #a8f0da; font-size: 15px; font-weight: normal; }
.unit i { width: 12px; height: 7px; border: 2px solid; border-color: #a8f0da #2f6b5f #2f6b5f #a8f0da; }
.message-line { height: 32px; padding: 2px 0 2px 2px; background: #c8e8e6; border-bottom: 1px solid #24576c; border-top: 2px solid #6d7f80; }
.message-line div { height: 27px; background: #b1fffe; border: solid #000; border-width: 1px 0 1px 1px; box-shadow: inset 4px 3px #d8ffff, inset 0 -2px #5f9c9c; }

/* ---- Taskbar ---- */
.taskbar { height: 9px; display: flex; overflow: hidden; background: #14365c; color: #fff; font: 12px "Noto Sans", sans-serif; }
.start { width: 60px; background: radial-gradient(circle at 27px 18px, #b9cbd8 15px, #5b7f9c 17px, #1d4a7c 18px); }
.tasks { flex: 1; display: flex; gap: 2px; }
.tasks button { flex: 1; padding: 3px 0 0 20px; border: 1px solid #9db8ca; border-top-width: 2px; border-radius: 3px 3px 0 0; background: linear-gradient(90deg, #6f9ab6, #46708f 70%, #8ab0c6); }
.tasks i { display: block; width: 24px; height: 6px; border-radius: 4px 4px 0 0; }
.taskbar time { width: 175px; padding-left: 106px; line-height: 22px; }

/* ---- Excel ---- */
.excel {
  position: absolute;
  left: 1174px;
  top: 13px;
  right: 0;
  bottom: 104px;
  display: flex;
  flex-direction: column;
  padding: 0 0 6px 6px;
  border: solid #a9c4d2;
  border-width: 1px 0 1px 1px;
  border-radius: 7px 0 0 7px;
  background: linear-gradient(#7ea9c4, #9fb8c4 8%, #5a5a5a 20%, #bcbcbc 25%, #10202c 27%, #23485e 40%, #23485e 94%, #000);
  box-shadow: 0 0 7px 2px rgba(0, 0, 0, 0.6);
  overflow: hidden;
  font: 12px "Noto Sans", "Noto Sans CJK SC", sans-serif;
  color: #15428b;
}
.excel-title { height: 27px; flex: none; margin-left: -6px; padding-left: 9px; display: flex; align-items: center; background: linear-gradient(#4e7fae, #82aecd 40%, #86bcd6 75%, #8fc0d4); border-bottom: 1px solid #24466a; }
.office { flex: none; width: 36px; height: 36px; margin-top: 20px; z-index: 2; border-radius: 50%; display: flex; align-items: center; justify-content: center; background: linear-gradient(#f6f8fa, #cfd5dd 48%, #aab4c2 52%, #f2f5f8); border: 1px solid #6c7c90; }
.quick { width: 100px; height: 22px; margin-left: 2px; padding-left: 12px; display: flex; align-items: center; gap: 8px; border: 1px solid #709cb8; border-left: 0; border-radius: 0 11px 11px 0; background: #9ac6dc; }
.quick-more { margin-left: 7px; }
.excel-title h1 { flex: 1; margin: 0 74px 0 0; text-align: right; white-space: nowrap; font-size: 12px; font-weight: normal; color: #101820; text-shadow: 0 0 6px #fff, 0 0 6px #fff; }

.tabs { height: 27px; flex: none; display: flex; align-items: flex-end; gap: 5px; padding-left: 47px; background: #bfdbff; }
.tab { height: 26px; padding: 0 12px; }
.tab.active { background: #e5eefa; border: 1px solid #8db2e3; border-bottom: 0; border-radius: 3px 3px 0 0; padding: 0 11px; }

.ribbon { height: 110px; flex: none; display: flex; gap: 3px; padding: 3px; background: linear-gradient(#e0ebf8, #d4e2f2 60%, #dfeefc); border-top: 1px solid #8db2e3; border-bottom: 2px solid #86a6cc; overflow: hidden; }
.group { flex: none; display: flex; flex-direction: column; border: 1px solid #a5c0de; border-radius: 3px; background: linear-gradient(#dfe8f3, #cfdeef 15%, #d9e6f4); overflow: hidden; }
.group footer { height: 20px; line-height: 20px; display: flex; justify-content: center; background: #c1d8f1; color: #3e6aaa; position: relative; }
.launch { position: absolute; right: 5px; top: 4px; }
.group-body { flex: 1; min-height: 0; display: flex; padding: 5px 3px 0; }
.clipboard { width: 72px; }
.clipboard footer { padding-right: 18px; }
.font { width: 236px; }
.align { width: 166px; }
.number { width: 136px; }
.style { width: 200px; }
.style footer { justify-content: flex-start; padding-left: 67px; }
.rows { display: flex; flex-direction: column; gap: 11px; }
.group-body.rows, .align .group-body { padding-top: 11px; }
.row { display: flex; gap: 4px; height: 25px; align-items: flex-start; }
.big { display: flex; flex-direction: column; align-items: center; line-height: 17px; white-space: nowrap; }
.big svg { margin-bottom: 6px; }
.big > .caret { margin-top: 5px; }
.style .big svg { margin-bottom: 5px; }
.style .group-body { gap: 5px; }
.clipboard .big { width: 42px; }
.stack { display: flex; flex-direction: column; gap: 8px; padding: 1px 0 0 4px; }
.stack button { width: 16px; }
.caret { display: inline-block; flex: none; width: 5px; height: 3px; background: #4b7ab8; clip-path: polygon(0 0, 100% 0, 50% 100%); vertical-align: middle; }
select {
  appearance: none;
  height: 25px;
  padding: 0 3px 1px;
  border: 1px solid #b3cbe8;
  color: #000;
  background-color: #eaf2fb;
  background-image: linear-gradient(45deg, transparent 50%, #4b7ab8 50%), linear-gradient(-45deg, transparent 50%, #4b7ab8 50%);
  background-position: right 7px top 11px, right 4px top 11px;
  background-size: 3px 3px;
  background-repeat: no-repeat;
}
.joined { display: flex; }
.font-name { width: 131px; }
.font-size { width: 46px; }
.format { width: 127px; }
.buttons { height: 22px; display: flex; border: 1px solid #9ebadb; border-radius: 2px; background: linear-gradient(#d8e5f4, #c5d8ee); }
.buttons button { min-width: 22px; padding: 0 3px; display: flex; align-items: center; justify-content: center; gap: 5px; border-right: 1px solid #b5cbe5; line-height: 14px; color: #222; }
.buttons button:last-child { border-right: 0; }
.on, .buttons .on { background: linear-gradient(#fcd9a0, #fbb65a 50%, #ffe58c); }
.serif button { font-family: "Liberation Serif", serif; font-size: 15px; font-weight: bold; }
.serif .grow { font-size: 17px; gap: 0; }
.serif .shrink { font-size: 13px; gap: 0; }
.serif sup { color: #3a66a8; font-size: 10px; line-height: 8px; align-self: flex-start; }
.biu button { width: 23px; }
.biu button:last-child { width: 32px; gap: 8px; }
.color span { font: bold 14px/13px "Liberation Serif", serif; color: #2a4f8c; border-bottom: 4px solid #f00; padding: 0 3px; }
.pinyin span { font-size: 9px; text-align: center; color: #223a70; }
.buttons .pinyin { line-height: 10px; gap: 4px; }
.wrap-col { margin-left: 4px; padding-left: 3px; border-left: 1px solid #a9c3e2; height: 56px; gap: 12px; }
.wrap-col button { height: 22px; width: 24px; display: flex; align-items: center; justify-content: center; border: 1px solid #c59a52; border-radius: 2px; }
.wrap-col .plain { width: 28px; border: 0; gap: 4px; }
.money { width: 80px; }
.number .buttons .pct { font-size: 13px; }
.number .buttons .comma { font-weight: bold; font-size: 16px; }
.decimals button { font-size: 8px; }
.buttons.decimals button { padding: 0 1px; line-height: 10px; }
.decimals span { text-align: right; font-weight: bold; }
.decimals b { color: #1d59c9; }

.formula-bar { height: 21px; flex: none; display: flex; background: #fff; border-bottom: 1px solid #6b93c4; font: 16px "Liberation Serif", serif; color: #000; }
.name-box { width: 160px; padding: 0 20px 0 0; text-align: center; background: linear-gradient(45deg, transparent 50%, #000 50%) right 11px top 9px / 4px 4px no-repeat, linear-gradient(-45deg, transparent 50%, #000 50%) right 7px top 9px / 4px 4px no-repeat; }
.fx { width: 77px; display: flex; justify-content: space-between; align-items: center; padding: 0 5px 0 4px; border: 1px solid #88a8d0; border-width: 0 1px 0 1px; border-radius: 10px 0 0 10px; background: linear-gradient(#b4cdec, #e4eefa 50%, #a8c4e8); color: #444; }
.fx em { font-weight: bold; line-height: 18px; }
.fx small { font-size: 12px; }
.knob { width: 9px; height: 9px; border-radius: 50%; background: #dfe6ef; border: 1px solid #b5c2d4; }
.formula { flex: 1; min-width: 0; padding: 0 11px; }

.sheet { flex: 1; min-height: 0; overflow: hidden; background: #fff; border-top: 2px solid #dce9f8; }
.sheet table { width: 100%; border-collapse: separate; border-spacing: 0; table-layout: fixed; font: 16px/17px "Liberation Serif", "Noto Sans CJK SC", serif; color: #000; }
.col-head { width: 34px; }
.col-a { width: 150px; }
.col-c { width: 8px; }
.sheet tr { height: 19px; }
.sheet th { padding: 0; font-weight: normal; background: #e4ecf7; color: #273f5f; border: solid #9eb6ce; border-width: 0 1px 1px 0; height: 19px; line-height: 18px; }
.sheet thead th { height: 21px; background: linear-gradient(#f6f9fd, #d5dfec); border-top: 1px solid #9eb6ce; font: 16px/19px "Liberation Serif", serif; }
.sheet thead .corner { background: linear-gradient(135deg, #a9c4e9 60%, #e0eaf7 60%); }
.sheet thead .current { background: linear-gradient(#f9d99f, #f1b956); border-color: #e39a3c; }
.sheet td { height: 19px; padding: 0 1px; line-height: 18px; white-space: nowrap; border: solid #000; border-width: 0 2px 1px 0; overflow: hidden; }
.sheet td.tick { padding-left: 5px; }
.sheet td:last-child { border: solid #d0d7e5; border-width: 0 0 1px; }

.sheet-tabs { height: 17px; flex: none; display: flex; background: linear-gradient(#8fadd6, #a6c0e4); border-top: 1px solid #7f9dc6; }
.sheet-nav { width: 63px; display: flex; align-items: center; justify-content: space-around; background: #cfe0f6; padding: 0 2px; }
.sheet-tab { height: 16px; padding: 0 8px; font: 14px/15px "Noto Sans CJK SC", sans-serif; background: #fff; clip-path: polygon(0 0, 100% 0, 88% 100%, 0 100%); }
.new-sheet { width: 44px; display: flex; justify-content: center; background: #c8daf2; clip-path: polygon(22% 0, 100% 0, 78% 100%, 0 100%); }
.hscroll { width: 126px; margin-left: auto; display: flex; align-items: center; gap: 7px; }
.split { width: 7px; height: 14px; background: #fff; border: 1px solid #7c97c0; }
.thumb { flex: 1; height: 14px; background: linear-gradient(#f4f7fc, #c4cfdf); border: 1px solid #6f8bb8; border-right: 0; }
.status { height: 22px; flex: none; display: flex; overflow: hidden; background: linear-gradient(#dce9fa, #b9d3f6 45%, #a8c8f4 60%, #d3e4fa); border-top: 1px solid #5c82b6; line-height: 20px; padding-left: 7px; color: #142c5c; }
.status span { width: 33px; flex: none; border-right: 1px solid #8fb0dc; }
.status .count { width: 16px; margin-left: auto; border: 0; overflow: hidden; white-space: nowrap; }

/* ---- Overlays ---- */
.language-bar { position: absolute; right: 46px; bottom: 81px; width: 79px; height: 25px; display: flex; align-items: center; gap: 7px; padding-left: 4px; background: linear-gradient(#8a8f8f, #3c4242 40%, #565c5c); color: #fff; font: 12px "Liberation Serif", serif; }
.arrows { position: absolute; inset: 0; pointer-events: none; }
```
